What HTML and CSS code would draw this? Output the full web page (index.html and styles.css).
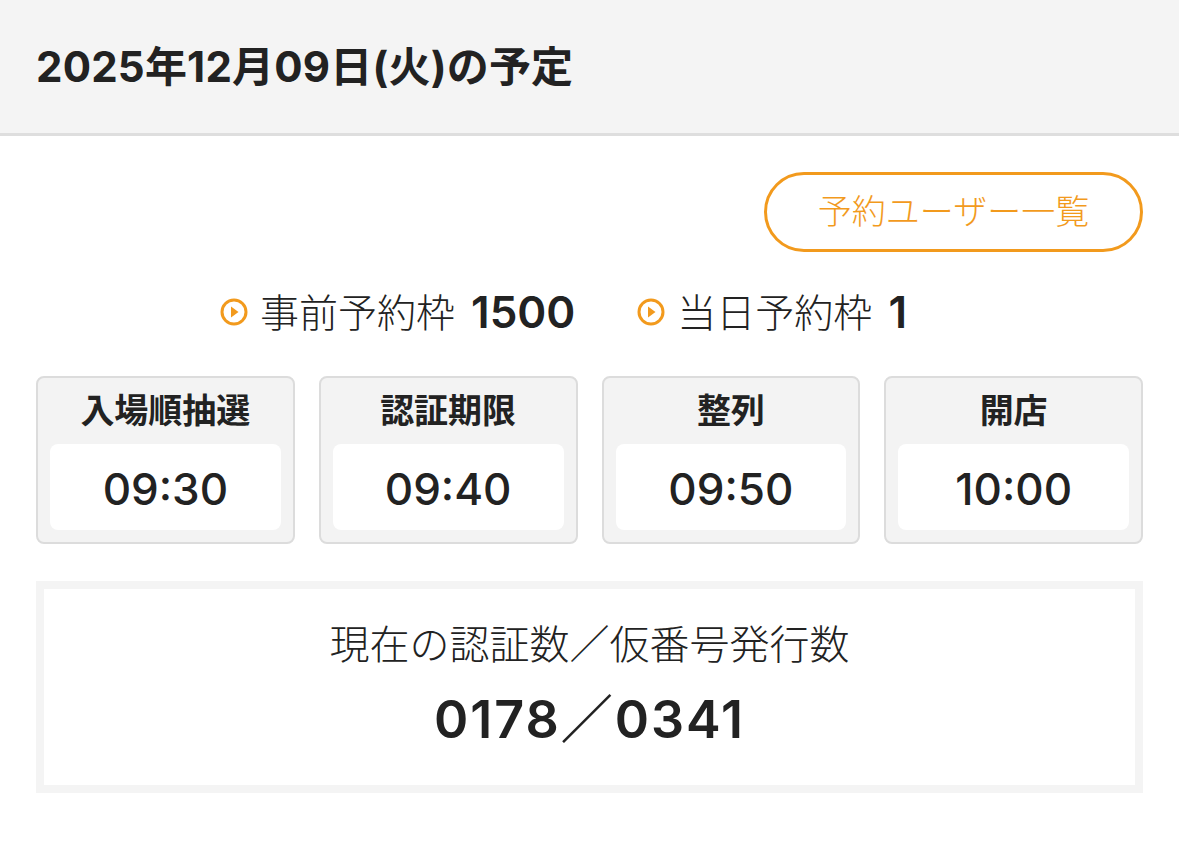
FILE: index.html
```html
<!DOCTYPE html>
<html lang="ja">
<head>
<meta charset="utf-8">
<link rel="stylesheet" href="styles.css">
</head>
<body>
<header class="page-header">
  <h1 class="page-title">2025年12月09日(火)の予定</h1>
</header>
<main class="content">
  <div class="actions">
    <button class="btn-outline">予約ユーザー一覧</button>
  </div>
  <div class="quota">
    <div class="quota-item">
      <svg class="quota-icon" viewBox="0 0 28 28" width="28" height="28"><circle cx="14" cy="14" r="12" fill="none" stroke="#f29a1d" stroke-width="3"/><path d="M11 8.5 L18.5 14 L11 19.5 Z" fill="#f29a1d"/></svg>
      <span class="quota-label">事前予約枠</span>
      <span class="quota-value">1500</span>
    </div>
    <div class="quota-item">
      <svg class="quota-icon" viewBox="0 0 28 28" width="28" height="28"><circle cx="14" cy="14" r="12" fill="none" stroke="#f29a1d" stroke-width="3"/><path d="M11 8.5 L18.5 14 L11 19.5 Z" fill="#f29a1d"/></svg>
      <span class="quota-label">当日予約枠</span>
      <span class="quota-value">1</span>
    </div>
  </div>
  <div class="cards">
    <div class="card"><div class="card-title">入場順抽選</div><div class="card-time">09:30</div></div>
    <div class="card"><div class="card-title">認証期限</div><div class="card-time">09:40</div></div>
    <div class="card"><div class="card-title">整列</div><div class="card-time">09:50</div></div>
    <div class="card"><div class="card-title">開店</div><div class="card-time">10:00</div></div>
  </div>
  <section class="counter">
    <div class="counter-label">現在の認証数／仮番号発行数</div>
    <div class="counter-value">0178／0341</div>
  </section>
</main>
</body>
</html>
```
FILE: styles.css
```css
* { box-sizing: border-box; }
body {
  margin: 0;
  background: #fff;
  color: #222;
  font-family: Inter, "Noto Sans CJK JP", sans-serif;
}
.page-header {
  height: 136px;
  background: #f4f4f4;
  border-bottom: 3px solid #dedede;
  display: flex;
  align-items: center;
  padding-left: 36px;
}
.page-title {
  margin: 0;
  font-size: 42px;
  font-weight: 700;
  line-height: 1;
  letter-spacing: 0.2px;
}
.content {
  padding: 36px 36px 40px;
}
.actions {
  display: flex;
  justify-content: flex-end;
}
.btn-outline {
  width: 379px;
  height: 80px;
  border: 3px solid #f29a1d;
  border-radius: 40px;
  background: #fff;
  color: #f29a1d;
  font-family: inherit;
  font-size: 34px;
  font-weight: 300;
  padding: 0;
  line-height: 1;
}
.quota {
  margin-top: 35px;
  height: 50px;
  display: flex;
  justify-content: center;
  gap: 62px;
  padding-right: 52px;
  align-items: center;
}
.quota-item {
  display: flex;
  align-items: center;
}
.quota-icon {
  margin-right: 12px;
  flex: none;
}
.quota-label {
  font-size: 39px;
  font-weight: 300;
  line-height: 1;
}
.quota-value {
  font-size: 44px;
  font-weight: 600;
  margin-left: 16px;
  line-height: 1;
}
.cards {
  margin-top: 39px;
  display: grid;
  grid-template-columns: repeat(4, 1fr);
  gap: 24px;
}
.card {
  height: 168px;
  background: #f3f3f3;
  border: 2px solid #dcdcdc;
  border-radius: 8px;
  padding: 0 12px 12px;
  display: flex;
  flex-direction: column;
}
.card-title {
  height: 66px;
  display: flex;
  align-items: center;
  justify-content: center;
  font-size: 34px;
  font-weight: 700;
  line-height: 1;
}
.card-time {
  flex: 1;
  background: #fff;
  border-radius: 8px;
  display: flex;
  align-items: center;
  justify-content: center;
  font-size: 44px;
  font-weight: 500;
  line-height: 1;
  padding-top: 4px;
}
.counter {
  margin-top: 37px;
  height: 212px;
  border: 8px solid #f4f4f4;
  background: #fff;
  display: flex;
  flex-direction: column;
  align-items: center;
}
.counter-label {
  margin-top: 34px;
  font-size: 40px;
  font-weight: 300;
  line-height: 44px;
}
.counter-value {
  margin-top: 22px;
  font-size: 52px;
  font-weight: 600;
  line-height: 62px;
  letter-spacing: 2px;
}
```
